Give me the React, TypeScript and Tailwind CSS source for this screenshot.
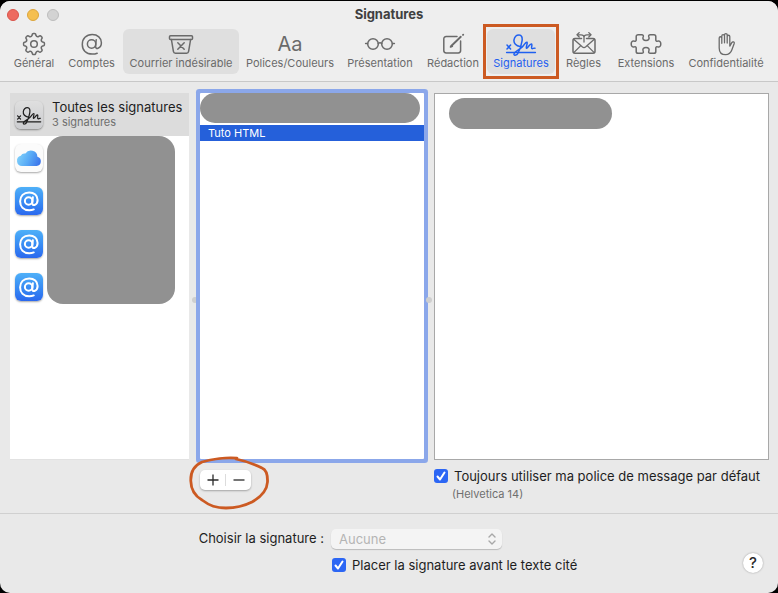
import type { ReactNode } from 'react';

interface ToolbarItem {
  label: string;
  icon: ReactNode;
  state?: 'hover' | 'active';
}

interface IconProps {
  children: ReactNode;
  className?: string;
}

// Shared canvas for the toolbar drawings
function Icon({ children, className = 'h-6 w-8' }: IconProps) {
  return (
    <svg
      viewBox="0 0 32 24"
      fill="none"
      stroke="currentColor"
      strokeWidth="1.5"
      strokeLinecap="round"
      strokeLinejoin="round"
      className={className}
      aria-hidden="true"
    >
      {children}
    </svg>
  );
}

function gearPath(teeth: number) {
  const step = (Math.PI * 2) / teeth;
  const at = (r: number, a: number) => `${(16 + r * Math.cos(a)).toFixed(2)} ${(12 + r * Math.sin(a)).toFixed(2)}`;
  let d = '';
  for (let i = 0; i < teeth; i++) {
    const a = i * step - Math.PI / 2;
    d += `${i === 0 ? 'M' : 'L'}${at(8.8, a - 0.22)}`;
    d += `Q${at(10.9, a - 0.17)} ${at(10.4, a)}`;
    d += `Q${at(10.9, a + 0.17)} ${at(8.8, a + 0.22)}`;
    d += `Q${at(7.3, a + step / 2)} ${at(8.8, a + step - 0.22)}`;
  }
  return d + 'Z';
}

function GearIcon() {
  return (
    <Icon>
      <path d={gearPath(8)} />
      <circle cx="16" cy="12" r="3.3" />
    </Icon>
  );
}

const AT_TAIL =
  'M20.2 7.800l-.6 6c-.2 2.300 1 3 2.400 2.500 2.300-.8 3.400-3 3.400-5.500 0-4.800-3.800-8.200-9.200-8.200-6 0-9.900 4-9.900 9.800s3.800 9.700 9.900 9.700c2 0 3.600-.3 5-.9';

function AtIcon() {
  return (
    <Icon>
      <circle cx="15.600" cy="12" r="4.200" />
      <path d={AT_TAIL} />
    </Icon>
  );
}

function JunkIcon() {
  return (
    <Icon>
      <rect x="4.500" y="3.800" width="23" height="3.600" rx="1" />
      <path d="M6.400 7.500l2 11.900c.2 1.200.9 1.800 2 1.800h11.200c1.100 0 1.800-.6 2-1.800l2-11.900" />
      <path d="M12.800 10.800l6.400 6.400M19.200 10.800l-6.400 6.400" />
    </Icon>
  );
}

function GlassesIcon() {
  return (
    <Icon>
      <circle cx="9" cy="12" r="5.300" />
      <circle cx="23" cy="12" r="5.300" />
      <path d="M14.200 11.300c1.100-.8 2.500-.8 3.600 0M3.500 11.600H1.600M28.500 11.600h1.900" />
    </Icon>
  );
}

function ComposeIcon() {
  return (
    <Icon>
      <path d="M20 4.600H9.200c-1.600 0-2.400.8-2.400 2.400v11.600c0 1.600.8 2.400 2.400 2.400h12c1.600 0 2.400-.8 2.400-2.400V9" />
      <path d="M14 14.300L23.800 4.800M26 2.900l.2-.2" strokeWidth="1.900" />
      <path d="M13.400 15l2-.8" />
    </Icon>
  );
}

function SignatureIcon({ className = 'h-6 w-8' }: { className?: string }) {
  return (
    <Icon className={className}>
      <path d="M1.600 20.400h28.800M2 13l3.600 4M5.600 13L2 17" />
      <path d="M15 14.500c-3.700-.4-6.600-3.300-6-6.600.5-3 2.700-5 5-5 2.600 0 3.600 2.500 3 6.200-.7 4.700-2.300 9.400-4.300 12.600-.9 1.500-3.200 2-3.700.7-.8-2.100 5.300-4.700 8.300-7.500 2.300-2.200 3.400-5.300 4.700-4.700 1.100.6-1.600 5.500-.5 6 1.200.5 3.200-4.700 4.900-4.300 1.500.5-.8 4.200.6 4.700.8.300 1.800-.8 2.900-.4" />
    </Icon>
  );
}

function RulesIcon() {
  return (
    <Icon>
      <path d="M13.500 6.500H7c-1.300 0-2 .7-2 2v10.800c0 1.300.7 2 2 2h18c1.300 0 2-.7 2-2V8.500c0-1.300-.7-2-2-2h-6.500" />
      <path d="M5.700 7.300l8.500 7.500c1.200 1 2.400 1 3.600 0l8.500-7.500M5.800 20.600l7-7M26.200 20.600l-7-7" strokeWidth="1.300" />
      <path d="M16 10V5.500c0-1.600-1-2.700-3-2.700h-3M16 5.500c0-1.600 1-2.700 3-2.700h3" strokeWidth="1.300" />
      <path d="M11.200.6L9 2.800 11.200 5M20.800.6L23 2.800 20.800 5" strokeWidth="1.300" />
    </Icon>
  );
}

function PuzzleIcon() {
  return (
    <Icon>
      <path d="M6.200 8V4.600c0-1.200.7-1.900 1.900-1.900h3.600c1.500 0 2 .9 1.500 2.100-1 2.100.4 3.800 2.800 3.800s3.800-1.700 2.800-3.800c-.5-1.200 0-2.100 1.500-2.100h3.600c1.200 0 1.900.7 1.900 1.900V8c0 1.200.9 1.500 1.900 1.100 1.700-.7 3.100.6 3.100 2.900s-1.400 3.600-3.100 2.900c-1-.4-1.900-.1-1.900 1.100v3.400c0 1.200-.7 1.900-1.900 1.900h-3.600c-1.500 0-2-.9-1.500-2.100 1-2.100-.4-3.800-2.800-3.800s-3.800 1.700-2.800 3.800c.5 1.200 0 2.100-1.500 2.100H8.100c-1.200 0-1.900-.7-1.900-1.900V16c0-1.200-.9-1.500-1.900-1.100-1.700.7-3.100-.6-3.100-2.900s1.400-3.600 3.100-2.900c1 .4 1.900.1 1.900-1.100z" />
    </Icon>
  );
}

function HandIcon() {
  return (
    <Icon>
      <g strokeWidth="1.300">
        <path d="M9.200 13.800V6c0-1.700 2.600-1.700 2.600 0v5.300M11.800 11V3.900c0-1.800 2.700-1.800 2.700 0v6.900M14.500 10.500V3c0-1.800 2.700-1.800 2.700 0v7.700M17.200 11V4.500c0-1.700 2.600-1.700 2.600 0v9.600l2-3.400c.8-1.500 2.900-.8 2.400.8l-2.300 6.300c-1.200 3.300-3 4.900-6.300 4.900-4.300 0-6.400-2.600-6.400-6.700v-2.500" />
      </g>
    </Icon>
  );
}

const TOOLBAR: ToolbarItem[] = [
  { label: 'Général', icon: <GearIcon /> },
  { label: 'Comptes', icon: <AtIcon /> },
  { label: 'Courrier indésirable', icon: <JunkIcon />, state: 'hover' },
  { label: 'Polices/Couleurs', icon: <span className="text-[20px] leading-6">Aa</span> },
  { label: 'Présentation', icon: <GlassesIcon /> },
  { label: 'Rédaction', icon: <ComposeIcon /> },
  { label: 'Signatures', icon: <SignatureIcon />, state: 'active' },
  { label: 'Règles', icon: <RulesIcon /> },
  { label: 'Extensions', icon: <PuzzleIcon /> },
  { label: 'Confidentialité', icon: <HandIcon /> },
];

function ToolbarButton({ label, icon, state }: ToolbarItem) {
  return (
    <button
      type="button"
      className={`relative flex h-[45px] flex-col items-center rounded-md pt-[3px] text-[11px] leading-[14px] whitespace-nowrap ${
        state ? 'bg-[#dfdfdf]' : ''
      } ${state === 'active' ? 'text-[#1f60f0]' : 'text-[#6a6a6a]'}`}
    >
      <span className="flex h-6 items-center justify-center">{icon}</span>
      <span>{label}</span>
      {state === 'active' && (
        <span className="pointer-events-none absolute -inset-x-1 -inset-y-[5px] border-3 border-[#cc5a22]" />
      )}
    </button>
  );
}

function CloudTile() {
  return (
    <span className="flex size-7 items-center justify-center rounded-md bg-[#fbfbfb] shadow-[0_1px_2px_rgba(0,0,0,0.35)]">
      <svg viewBox="0 0 26 18" className="w-[26px]" aria-hidden="true">
        <defs>
          <linearGradient id="cloud" x1="0" y1="0.4" x2="1" y2="0.7">
            <stop offset="0" stopColor="#7fd0fa" />
            <stop offset="0.5" stopColor="#58aaf6" />
            <stop offset="1" stopColor="#3b74ea" />
          </linearGradient>
        </defs>
        <path
          d="M6 17a5.200 5.200 0 0 1-1.200-10.200A4.200 4.200 0 0 1 9.400 4.600a6.500 6.500 0 0 1 12 3.200A4.700 4.700 0 0 1 20.600 17z"
          fill="url(#cloud)"
        />
      </svg>
    </span>
  );
}

function AtTile() {
  return (
    <span className="flex size-7 items-center justify-center rounded-md bg-linear-to-b from-[#4fb0f8] to-[#2b68ee] text-white shadow-[0_1px_2px_rgba(0,0,0,0.35)]">
      <svg
        viewBox="4 0 24 24"
        fill="none"
        stroke="currentColor"
        strokeWidth="2.200"
        strokeLinecap="round"
        className="size-[22px]"
        aria-hidden="true"
      >
        <circle cx="15.600" cy="12" r="4.100" />
        <path d={AT_TAIL} />
      </svg>
    </span>
  );
}

function Checkbox({ id }: { id: string }) {
  return (
    <span className="relative flex size-3.5 shrink-0">
      <input
        id={id}
        type="checkbox"
        defaultChecked
        className="peer size-3.5 appearance-none rounded-[3px] border border-gray-400 bg-white checked:border-0 checked:bg-[#2c66f4]"
      />
      <svg
        viewBox="0 0 14 14"
        fill="none"
        stroke="white"
        strokeWidth="2"
        strokeLinecap="round"
        strokeLinejoin="round"
        className="pointer-events-none absolute inset-0 hidden peer-checked:block"
        aria-hidden="true"
      >
        <path d="M3.500 7.500l2.500 3 4.500-7" />
      </svg>
    </span>
  );
}

function Splitter() {
  return (
    <div className="flex items-center justify-center pt-[46px]">
      <span className="size-1.5 rounded-full bg-[#cfcfcf]" />
    </div>
  );
}

function Sidebar() {
  return (
    <nav className="border-b border-[#e2e2e2] bg-white">
      <button type="button" className="flex h-[43px] w-full items-center bg-[#dcdcdc] pl-[5px] text-left whitespace-nowrap">
        <span className="flex size-7 shrink-0 items-center justify-center rounded-md bg-linear-to-b from-[#dfdfdf] to-[#cbcccf] text-[#1d1d1d] shadow-[0_1px_2px_rgba(0,0,0,0.4)]">
          <SignatureIcon className="h-5 w-[26px]" />
        </span>
        <span className="ml-[9px] pb-0.5">
          <span className="block text-[13px] leading-4 text-[#1e1e1e]">Toutes les signatures</span>
          <span className="block text-[11px] leading-[14px] text-[#6f6f6f]">3 signatures</span>
        </span>
      </button>
      <div className="flex pl-[5px]">
        <ul>
          <li className="flex h-[43px] items-center"><CloudTile /></li>
          <li className="flex h-[43px] items-center"><AtTile /></li>
          <li className="flex h-[43px] items-center"><AtTile /></li>
          <li className="flex h-[43px] items-center"><AtTile /></li>
        </ul>
        <div className="ml-1 h-[168px] w-32 rounded-2xl bg-[#919191]" />
      </div>
    </nav>
  );
}

function AddRemove() {
  return (
    <div className="relative flex h-5 w-[51px] items-center rounded-[5px] bg-white text-[#2a2a2a] shadow-[0_1px_2px_rgba(0,0,0,0.3)]">
      <button type="button" aria-label="Ajouter" className="flex h-full flex-1 items-center justify-center">
        <svg viewBox="0 0 12 12" stroke="currentColor" strokeWidth="1.300" className="size-3" aria-hidden="true">
          <path d="M6 .5v11M.5 6h11" />
        </svg>
      </button>
      <span className="h-3 w-px bg-[#dcdcdc]" />
      <button type="button" aria-label="Supprimer" className="flex h-full flex-1 items-center justify-center">
        <svg viewBox="0 0 12 12" stroke="currentColor" strokeWidth="1.300" className="size-3" aria-hidden="true">
          <path d="M.5 6h11" />
        </svg>
      </button>
      {/* Hand-drawn highlight */}
      <svg
        viewBox="0 0 82 54"
        fill="none"
        stroke="#cc5a22"
        strokeWidth="2.800"
        strokeLinecap="round"
        className="pointer-events-none absolute -top-[14px] -left-3 h-[54px] w-[82px] max-w-none"
        aria-hidden="true"
      >
        <path d="M49 2.200C39 1.200 24 3 14 6C5 10 2.500 17 2.800 25C3 34 7 40 14 44C22 50 28 52 38 52C49 52 56 50 64 46C73 41 79 34 79.500 26C79.700 20 79 14 74 12C66 8 60 5.500 48 3" />
      </svg>
    </div>
  );
}

export default function App() {
  return (
    <div className="min-h-screen bg-black pt-px font-['Inter','Liberation_Sans',sans-serif]">
      <main className="flex min-h-[calc(100vh-1px)] flex-col rounded-[10px] bg-[#e9e9e9]">
        <header className="rounded-t-[10px] border-b border-[#c8c8c8] bg-[#eeeeee]">
          <div className="grid h-7 grid-cols-[1fr_auto_1fr] items-center px-[7px]">
            <div className="flex gap-2">
              <button type="button" aria-label="Fermer" className="size-3 rounded-full border border-[#d9544a] bg-[#ed6a5f]" />
              <button type="button" aria-label="Réduire" className="size-3 rounded-full border border-[#dca53c] bg-[#f5bf4f]" />
              <button type="button" aria-label="Agrandir" className="size-3 rounded-full border border-[#bdbdbd] bg-[#d3d3d3]" />
            </div>
            <h1 className="pb-0.5 text-[13px] leading-4 font-bold text-[#404040]">Signatures</h1>
          </div>
          <div className="grid grid-cols-[52fr_59fr_116fr_98fr_78fr_64fr_68fr_53fr_68fr_88fr] gap-0.5 px-2 pb-[7px]">
            {TOOLBAR.map((item) => (
              <ToolbarButton key={item.label} {...item} />
            ))}
          </div>
        </header>

        <section className="grid flex-1 grid-cols-[179fr_11fr_224fr_10fr_335fr] grid-rows-[1fr_auto] pt-[11px] pr-[9px] pl-2.5">
          <Sidebar />
          <Splitter />
          <ul className="mb-px rounded-[1px] bg-white ring-4 ring-[#8ba7ea]">
            <li className="mr-1 h-[30px] rounded-2xl bg-[#919191]" />
            <li className="mt-0.5 bg-[#2560da] pl-2 text-[11px] leading-4 text-white">Tuto HTML</li>
          </ul>
          <Splitter />
          <div className="border border-[#a8a8a8] bg-white pt-1 pl-3.5">
            <div className="h-[31px] w-[163px] rounded-2xl bg-[#919191]" />
          </div>

          <div className="col-start-3 h-[53px] pt-2.5">
            <AddRemove />
          </div>
          <div className="col-start-5 pt-2">
            <div className="flex items-center gap-1.5">
              <Checkbox id="default-font" />
              <label htmlFor="default-font" className="text-[13px] leading-4 whitespace-nowrap text-[#1e1e1e]">
                Toujours utiliser ma police de message par défaut
              </label>
            </div>
            <p className="mt-[3px] pl-[18px] text-[11px] leading-[14px] text-[#6f6f6f]">(Helvetica 14)</p>
          </div>
        </section>

        <footer className="grid h-20 grid-cols-[324fr_7px_447fr] border-t border-[#d0d0d0] pt-[15px] text-[13px] leading-4 text-[#1e1e1e]">
          <label htmlFor="signature" className="pt-px text-right whitespace-nowrap">
            Choisir la signature :
          </label>
          <div className="col-start-3 flex justify-between pr-[15px]">
            <div>
              <div className="relative w-[171px]">
                <select
                  id="signature"
                  disabled
                  className="block h-5 w-full appearance-none rounded-[5px] bg-[#f4f4f4] px-2 text-[13px] leading-5 text-[#b4b4b4] opacity-100 shadow-[0_1px_1px_rgba(0,0,0,0.2)]"
                >
                  <option>Aucune</option>
                </select>
                <svg
                  viewBox="0 0 8 12"
                  fill="none"
                  stroke="#a8a8a8"
                  strokeWidth="1.400"
                  strokeLinecap="round"
                  strokeLinejoin="round"
                  className="pointer-events-none absolute top-1 right-1.5 h-3 w-2"
                  aria-hidden="true"
                >
                  <path d="M1 4l3-3 3 3M1 8l3 3 3-3" />
                </svg>
              </div>
              <div className="mt-2 flex items-center gap-1.5 pl-px">
                <Checkbox id="before-quote" />
                <label htmlFor="before-quote" className="whitespace-nowrap">
                  Placer la signature avant le texte cité
                </label>
              </div>
            </div>
            <button
              type="button"
              aria-label="Aide"
              className="mt-6 size-5 rounded-full bg-white text-[15px] leading-5 font-medium text-[#2a2a2a] shadow-[0_0_2px_rgba(0,0,0,0.35)]"
            >
              ?
            </button>
          </div>
        </footer>
      </main>
    </div>
  );
}
